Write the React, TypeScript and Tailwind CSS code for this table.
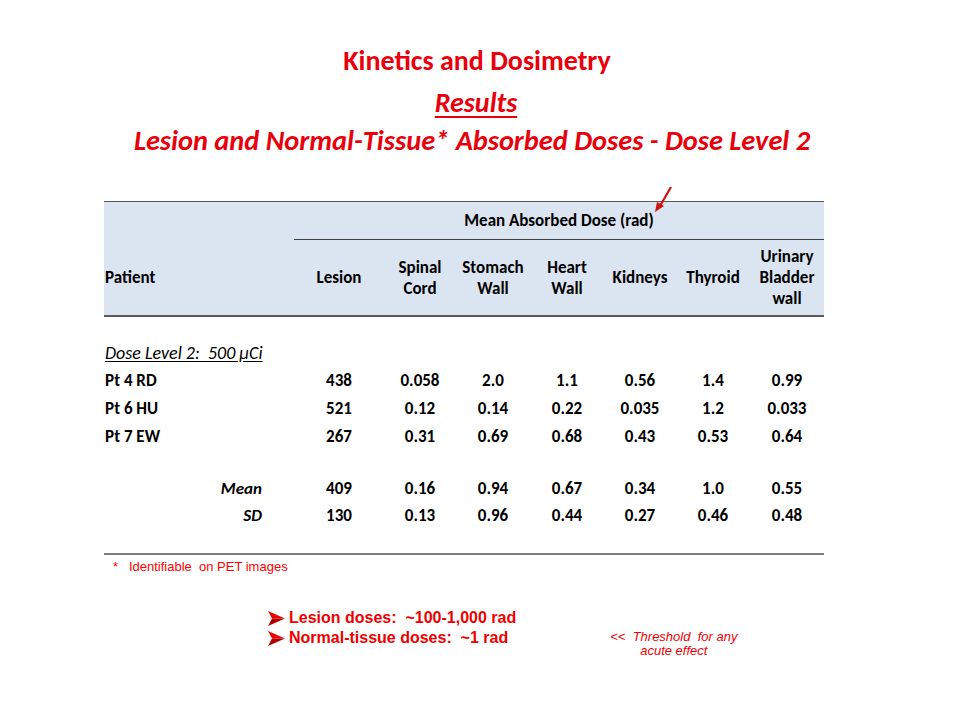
import React from "react";

const cols = "grid grid-cols-[190px_90px_72px_74px_74px_72px_74px_74px]";

const rows: [string, string[]][] = [
  ["Pt 4 RD", ["438", "0.058", "2.0", "1.1", "0.56", "1.4", "0.99"]],
  ["Pt 6 HU", ["521", "0.12", "0.14", "0.22", "0.035", "1.2", "0.033"]],
  ["Pt 7 EW", ["267", "0.31", "0.69", "0.68", "0.43", "0.53", "0.64"]],
];
const stats: [string, string[]][] = [
  ["Mean", ["409", "0.16", "0.94", "0.67", "0.34", "1.0", "0.55"]],
  ["SD", ["130", "0.13", "0.96", "0.44", "0.27", "0.46", "0.48"]],
];

function Bullet() {
  return (
    <svg width="17" height="15" viewBox="0 0 17 15" className="shrink-0">
      <polygon points="0,0 17,7.5 4,7.5" fill="#f00000" />
      <polygon points="4,7.5 17,7.5 0,15" fill="#b00000" />
    </svg>
  );
}

export default function App() {
  return (
    <div
      className="w-[960px] h-[720px] bg-white text-black overflow-hidden"
      style={{ fontFamily: "Carlito, Lato, 'Open Sans', sans-serif" }}
    >
      <div className="pt-[45px] flex flex-col items-center text-[#e8000b] font-bold">
        <div className="mr-[6px] text-[28px] leading-[32px]">Kinetics and Dosimetry</div>
        <div className="mr-[8px] mt-[10px] text-[28px] leading-[32px] italic underline decoration-2 underline-offset-4">
          Results
        </div>
        <div className="mr-[16px] mt-[6px] text-[28.4px] leading-[32px] italic whitespace-nowrap">
          Lesion and Normal-Tissue* Absorbed Doses - Dose Level 2
        </div>
      </div>

      <div className="relative ml-[104px] mt-[44px] w-[720px] text-[17px] font-bold">
        <svg
          className="absolute left-[548px] top-[-16px]"
          width="24"
          height="30"
          viewBox="0 0 24 30"
        >
          <line x1="19" y1="2" x2="8" y2="21" stroke="#d01010" strokeWidth="2.2" />
          <polygon points="3,27 5,17 12,21" fill="#d01010" />
        </svg>

        <div className="bg-[#dbe5f1] border-t-[1.5px] border-b-2 border-[#595959]">
          <div className={cols}>
            <div />
            <div className="col-span-7 h-[38px] flex items-center justify-center border-b border-[#404040]">
              Mean Absorbed Dose (rad)
            </div>
          </div>
          <div className={`${cols} h-[75px] items-center leading-[21px] text-center`}>
            <div className="text-left pl-[1px]">Patient</div>
            <div>Lesion</div>
            <div>
              Spinal
              <br />
              Cord
            </div>
            <div>
              Stomach
              <br />
              Wall
            </div>
            <div>
              Heart
              <br />
              Wall
            </div>
            <div>Kidneys</div>
            <div>Thyroid</div>
            <div>
              Urinary
              <br />
              Bladder
              <br />
              wall
            </div>
          </div>
        </div>

        <div className="pt-[22px] pb-[24px] border-b-2 border-[#7f7f7f]">
          <div className="h-[28px] flex items-center pl-[1px] font-normal italic text-[18px]">
            <span className="underline underline-offset-2 whitespace-pre">
              Dose Level 2:  500 μCi
            </span>
          </div>
          {rows.map(([name, vals]) => (
            <div key={name} className={`${cols} h-[28px] items-center text-center`}>
              <div className="text-left pl-[1px]">{name}</div>
              {vals.map((v, i) => (
                <div key={i}>{v}</div>
              ))}
            </div>
          ))}
          <div className="h-[24px]" />
          {stats.map(([name, vals]) => (
            <div key={name} className={`${cols} h-[27px] items-center text-center`}>
              <div className="text-right pr-[32px] italic">{name}</div>
              {vals.map((v, i) => (
                <div key={i}>{v}</div>
              ))}
            </div>
          ))}
        </div>

        <div
          className="mt-[4px] pl-[9px] text-[13px] leading-[16px] text-[#ff0000] font-normal whitespace-pre"
          style={{ fontFamily: "'Liberation Sans', Arial, sans-serif" }}
        >
          {"*   Identifiable  on PET images"}
        </div>
      </div>

      <div
        className="mt-[33px] ml-[268px] flex items-start text-[#ee0000]"
        style={{ fontFamily: "'Liberation Sans', Arial, sans-serif" }}
      >
        <div className="flex flex-col">
          <div className="flex items-center gap-[4px] h-[20px]">
            <Bullet />
            <span className="text-[16px] font-bold whitespace-pre">Lesion doses:  ~100-1,000 rad</span>
          </div>
          <div className="flex items-center gap-[4px] h-[20px]">
            <Bullet />
            <span className="text-[16px] font-bold whitespace-pre">Normal-tissue doses:  ~1 rad</span>
          </div>
        </div>
        <div className="ml-[94px] mt-[22px] text-[13px] leading-[14px] italic text-center whitespace-pre">
          {"<<  Threshold  for any"}
          <br />
          {"acute effect"}
        </div>
      </div>
    </div>
  );
}
